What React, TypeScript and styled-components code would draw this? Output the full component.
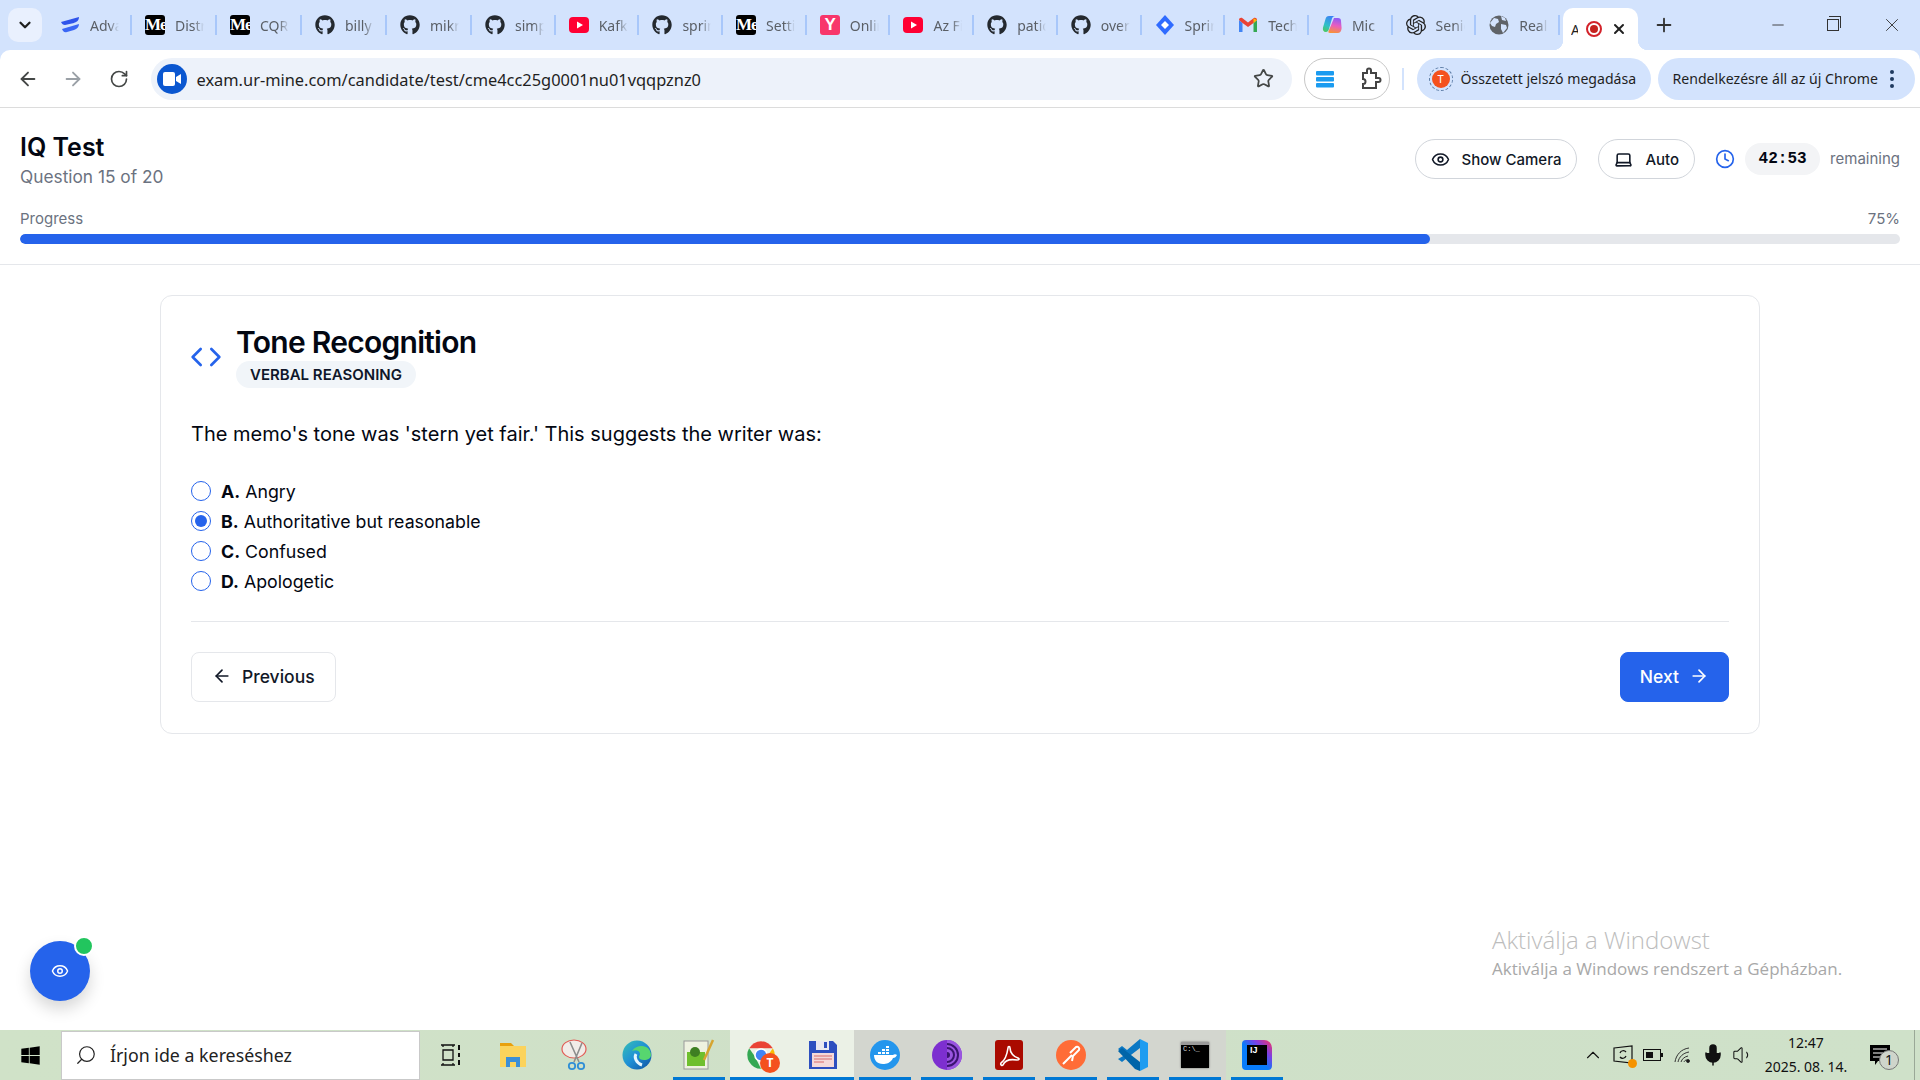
import React from "react";
import styled, { createGlobalStyle } from "styled-components";
import {
	ArrowLeft,
	ArrowRight,
	ChevronDown,
	ChevronUp,
	Clock,
	Code,
	Eye,
	Laptop,
	Mic,
	Minus,
	Plus,
	RotateCw,
	Search,
	Star,
	Volume1,
	X
} from "lucide-react";
import { FaGithub, FaWindows } from "react-icons/fa";
import { SiOpenai } from "react-icons/si";

const GlobalStyle = createGlobalStyle`
	* { box-sizing: border-box; margin: 0; padding: 0; }
	html, body, #root { width: 100%; height: 100%; overflow: hidden; }
	body { background: #d3e3fd; font-family: Inter, "Noto Sans", sans-serif; color: #030712; }
`;

const Screen = styled.div`
	position: relative;
	display: grid;
	grid-template-rows: 50px 58px 1fr 50px;
	width: 1920px;
	height: 1080px;
	background: #d3e3fd;
`;

/* ---------- browser tabs ---------- */
const TabStrip = styled.div`
	display: flex;
	align-items: flex-end;
	padding-left: 8px;
	font-family: "Noto Sans", sans-serif;
`;

const TabListButton = styled.div`
	width: 34px;
	height: 34px;
	margin: 0 4px 8px 0;
	border-radius: 10px;
	background: #e9f0fe;
	color: #1f1f1f;
	display: flex;
	align-items: center;
	justify-content: center;
`;

const Tab = styled.div`
	position: relative;
	flex: 0 0 83.7px;
	height: 50px;
	padding-left: 14px;
	display: flex;
	align-items: center;
	gap: 10px;
	&:nth-child(-n + 6) {
		flex-basis: 85px;
	}
	&::after {
		content: "";
		position: absolute;
		right: -1px;
		top: 15px;
		width: 2px;
		height: 20px;
		background: #a8c7fa;
	}
`;

const TabTitle = styled.span`
	width: 29px;
	overflow: hidden;
	white-space: nowrap;
	font-size: 14px;
	color: #5a5f66;
	-webkit-mask-image: linear-gradient(90deg, #000 65%, transparent);
	mask-image: linear-gradient(90deg, #000 65%, transparent);
`;

const ActiveTab = styled.div`
	position: relative;
	flex: 0 0 75px;
	height: 42px;
	margin-left: 4px;
	padding-left: 8px;
	display: flex;
	align-items: center;
	background: #fff;
	border-radius: 10px 10px 0 0;
	font-size: 14px;
	color: #1f1f1f;
	&::before,
	&::after {
		content: "";
		position: absolute;
		bottom: 0;
		width: 10px;
		height: 10px;
	}
	&::before {
		left: -10px;
		background: radial-gradient(circle at 0 0, transparent 10px, #fff 10.5px);
	}
	&::after {
		right: -10px;
		background: radial-gradient(circle at 100% 0, transparent 10px, #fff 10.5px);
	}
`;

const ActiveLetter = styled.span`
	width: 7px;
	overflow: hidden;
`;

const RecordDot = styled.span`
	width: 16px;
	height: 16px;
	margin-left: 8px;
	border-radius: 50%;
	border: 2px solid #d3222a;
	display: flex;
	align-items: center;
	justify-content: center;
	&::before {
		content: "";
		width: 8px;
		height: 8px;
		border-radius: 50%;
		background: #c5221f;
	}
`;

const TabClose = styled.span`
	display: flex;
	margin-left: 9px;
	color: #1f1f1f;
`;

const NewTab = styled.div`
	margin: 0 auto 8px 14px;
	width: 24px;
	height: 34px;
	display: flex;
	align-items: center;
	justify-content: center;
	color: #333;
`;

const WindowButton = styled.div`
	width: 57px;
	height: 50px;
	display: flex;
	align-items: center;
	justify-content: center;
	color: #333;
`;

const RestoreIcon = styled.span`
	position: relative;
	width: 12px;
	height: 12px;
	margin-right: 3px;
	border: 1px solid #333;
	&::before {
		content: "";
		position: absolute;
		left: 1px;
		top: -4px;
		width: 11px;
		height: 11px;
		border-top: 1px solid #333;
		border-right: 1px solid #333;
	}
`;

const FaviconSquare = styled.span<{ $bg: string }>`
	flex: none;
	width: 20px;
	height: 20px;
	border-radius: 3px;
	background: ${p => p.$bg};
	color: #fff;
	overflow: hidden;
	display: flex;
	align-items: center;
	font: bold 17px "Liberation Serif", serif;
	letter-spacing: -1px;
`;

const FaviconY = styled(FaviconSquare)`
	justify-content: center;
	font: 900 17px "Liberation Sans", sans-serif;
`;

const Svg20 = styled.svg`
	flex: none;
	width: 20px;
	height: 20px;
`;

const YoutubeIcon = () => (
	<Svg20 viewBox="0 0 20 20">
		<rect y="2" width="20" height="16" rx="4" fill="#ff0033" />
		<path d="M8 6.5 14 10 8 13.5Z" fill="#fff" />
	</Svg20>
);

const WaveLogo = () => (
	<Svg20 viewBox="0 0 20 20">
		<path d="M1 7 19 2c0 4-3 5-5 6L5 10C3 10 2 9 1 7Z" fill="#2f54eb" />
		<path d="M2 14 19 9c0 3-2 5-5 6l-7 2c-3 1-4-1-5-3Z" fill="#3b67f5" />
	</Svg20>
);

const DiamondLogo = () => (
	<Svg20 viewBox="0 0 20 20">
		<path d="M10 0 19 10 10 20 1 10Z" fill="#2f6bff" />
		<path d="M10 6 14 10 10 14 6 10Z" fill="#fff" />
	</Svg20>
);

const GmailLogo = () => (
	<Svg20 viewBox="0 0 20 20">
		<path d="M1 5v12h3.5V8Z" fill="#4285f4" />
		<path d="M15.5 8v9H19V5Z" fill="#34a853" />
		<path d="M1 5c0-2 2-2.8 3.5-1.8L10 7.5l5.5-4.3C17 2.2 19 3 19 5l-3.5 3L10 12 4.5 8Z" fill="#ea4335" />
		<path d="M15.5 3.2 19 5l-3.5 3Z" fill="#fbbc04" />
	</Svg20>
);

const CopilotLogo = () => (
	<Svg20 viewBox="0 0 20 20">
		<defs>
			<linearGradient id="cp1" x1="0.6" y1="0" x2="0.2" y2="1">
				<stop offset="0" stopColor="#3b82f6" />
				<stop offset="0.6" stopColor="#2fc0c8" />
				<stop offset="1" stopColor="#4cc95c" />
			</linearGradient>
			<linearGradient id="cp2" x1="0.6" y1="0" x2="0.4" y2="1">
				<stop offset="0" stopColor="#8b5cf6" />
				<stop offset="0.5" stopColor="#e85dc0" />
				<stop offset="1" stopColor="#f7923a" />
			</linearGradient>
		</defs>
		<path d="M12 3h4c2 0 3 1 3 3l.6 7c0 3-1.6 5-4 5H8c-2 0-2-1-1-3Z" fill="url(#cp2)" />
		<path d="M7 1h6c-1.5 0-2.5 1-3 2.5L7 14c-.6 2-1.6 3-3 3-2.4 0-3.6-2-3-4.5L3.5 4C4 2 5 1 7 1Z" fill="url(#cp1)" />
	</Svg20>
);

const GlobeLogo = () => (
	<Svg20 viewBox="0 0 20 20">
		<circle cx="10" cy="10" r="9.5" fill="#5f6368" />
		<path d="M5 3l4 1 1 3-3 2-1 3-3-1-2-3ZM12 9l5 1 1 3-4 5-2-4ZM12 1l4 2 1 3-4-1Z" fill="#d3e3fd" />
	</Svg20>
);

const GithubIcon = () => <FaGithub size={20} color="#24292f" style={{ flex: "none" }} />;
const MediumIcon = () => <FaviconSquare $bg="#000">Me</FaviconSquare>;
const OpenAiIcon = () => <SiOpenai size={20} color="#222" style={{ flex: "none" }} />;

const tabs: { title: string; icon: React.ReactNode }[] = [
	{ title: "Advanced", icon: <WaveLogo /> },
	{ title: "Distributed", icon: <MediumIcon /> },
	{ title: "CQRS", icon: <MediumIcon /> },
	{ title: "billy", icon: <GithubIcon /> },
	{ title: "mikro", icon: <GithubIcon /> },
	{ title: "simple", icon: <GithubIcon /> },
	{ title: "Kafka", icon: <YoutubeIcon /> },
	{ title: "spring", icon: <GithubIcon /> },
	{ title: "Settings", icon: <MediumIcon /> },
	{ title: "Online", icon: <FaviconY $bg="#f8366b">Y</FaviconY> },
	{ title: "Az Fi", icon: <YoutubeIcon /> },
	{ title: "patio", icon: <GithubIcon /> },
	{ title: "overt", icon: <GithubIcon /> },
	{ title: "Spring", icon: <DiamondLogo /> },
	{ title: "Tech", icon: <GmailLogo /> },
	{ title: "Mic", icon: <CopilotLogo /> },
	{ title: "Senior", icon: <OpenAiIcon /> },
	{ title: "Real", icon: <GlobeLogo /> }
];

/* ---------- browser toolbar ---------- */
const Toolbar = styled.div`
	display: flex;
	align-items: center;
	padding-left: 5px;
	background: #fff;
	border-radius: 10px 10px 0 0;
	border-bottom: 1px solid #dcdcdc;
	font-family: "Noto Sans", sans-serif;
`;

const NavButton = styled.div<{ $dim?: boolean }>`
	flex: 0 0 45.5px;
	display: flex;
	justify-content: center;
	color: ${p => (p.$dim ? "#9aa0a6" : "#444746")};
`;

const AddressBar = styled.div`
	margin-left: 9px;
	width: 1141px;
	height: 42px;
	border-radius: 21px;
	background: #edf2fa;
	display: flex;
	align-items: center;
	padding: 0 18px 0 6px;
	font-size: 16.4px;
	color: #1f1f1f;
`;

const SiteChip = styled.span`
	width: 30px;
	height: 30px;
	margin-right: 10px;
	border-radius: 50%;
	background: #0b57d0;
	display: flex;
	align-items: center;
	justify-content: center;
`;

const Url = styled.span`
	flex: 1;
	padding-top: 2px;
`;

const ExtensionGroup = styled.div`
	margin-left: 12px;
	width: 86px;
	height: 42px;
	border: 1px solid #c7c7c7;
	border-radius: 21px;
	display: flex;
	align-items: center;
	justify-content: space-between;
	padding: 0 7px 0 11px;
`;

const ToolbarDivider = styled.span`
	margin: 0 13px 0 12px;
	width: 2px;
	height: 22px;
	background: #d3e3fd;
`;

const Pill = styled.div<{ $w: number }>`
	flex: 0 0 ${p => p.$w}px;
	height: 42px;
	border-radius: 21px;
	background: #d3e3fd;
	display: flex;
	align-items: center;
	font-size: 14.1px;
	white-space: nowrap;
	color: #1f1f1f;
	& + & {
		margin-left: 7px;
	}
`;

const Avatar = styled.span`
	width: 24px;
	height: 24px;
	margin: 0 8px 0 12px;
	border-radius: 50%;
	border: 1.5px dashed #5f7fa8;
	display: flex;
	align-items: center;
	justify-content: center;
	&::before {
		content: "T";
		width: 18px;
		height: 18px;
		border-radius: 50%;
		background: #f4511e;
		color: #fff;
		font-size: 11px;
		line-height: 18px;
		text-align: center;
	}
`;

const PillText = styled.span<{ $left?: number }>`
	margin-left: ${p => p.$left ?? 0}px;
`;

const MoreDots = styled.span`
	margin-left: 12px;
	width: 5px;
	display: flex;
	flex-direction: column;
	gap: 3px;
	i {
		width: 4px;
		height: 4px;
		border-radius: 50%;
		background: #1f3a5f;
	}
`;

/* ---------- test page ---------- */
const Page = styled.div`
	background: #fff;
	display: flex;
	flex-direction: column;
`;

const Header = styled.header`
	padding: 23px 20px 20px;
	border-bottom: 1px solid #e5e7eb;
`;

const HeaderRow = styled.div`
	display: flex;
	justify-content: space-between;
	align-items: center;
	margin-bottom: 20px;
`;

const TestTitle = styled.h1`
	font-size: 25px;
	line-height: 32px;
	font-weight: 600;
	color: #030712;
`;

const Subtitle = styled.p`
	margin-top: 2px;
	font-size: 17.3px;
	line-height: 24px;
	color: #6b7280;
`;

const HeaderActions = styled.div`
	display: flex;
	align-items: center;
	margin-bottom: 2px;
`;

const RoundButton = styled.div`
	height: 40px;
	margin-right: 21px;
	padding: 0 15px;
	border: 1px solid #d1d5db;
	border-radius: 20px;
	display: flex;
	align-items: center;
	gap: 12px;
	font-size: 15px;
	font-weight: 500;
	color: #111827;
	& + & {
		margin-right: 20px;
	}
`;

const TimerPill = styled.span`
	margin: 0 10px;
	height: 32px;
	width: 75px;
	border-radius: 16px;
	background: #f3f4f6;
	display: flex;
	align-items: center;
	justify-content: center;
	font: bold 16px "Liberation Mono", monospace;
	color: #030712;
`;

const MutedText = styled.span`
	font-size: 15px;
	line-height: 20px;
	color: #6b7280;
`;

const ProgressLabels = styled.div`
	display: flex;
	justify-content: space-between;
	margin-bottom: 5px;
`;

const ProgressTrack = styled.div`
	height: 10px;
	border-radius: 5px;
	background: #e5e7eb;
	overflow: hidden;
`;

const ProgressFill = styled.div`
	height: 100%;
	border-radius: 5px;
	background: #2563eb;
`;

const Main = styled.main`
	padding: 30px 160px;
`;

const Card = styled.section`
	padding: 29px 30px 31px;
	border: 1px solid #e5e7eb;
	border-radius: 12px;
`;

const CardHeader = styled.div`
	display: flex;
	align-items: center;
	gap: 14px;
	margin-bottom: 32px;
	& > svg {
		margin-left: -1px;
	}
`;

const CardTitle = styled.h2`
	font-size: 30px;
	line-height: 34px;
	font-weight: 600;
	letter-spacing: -0.73px;
	color: #030712;
`;

const Badge = styled.span`
	display: block;
	width: fit-content;
	margin-top: 2px;
	height: 27px;
	padding: 0 14px;
	border-radius: 14px;
	background: #f1f5f9;
	font-size: 15px;
	line-height: 27px;
	font-weight: 600;
	color: #0f172a;
`;

const Question = styled.p`
	font-size: 20px;
	line-height: 28px;
	margin-bottom: 28px;
	color: #030712;
`;

const Options = styled.div`
	display: flex;
	flex-direction: column;
	padding-bottom: 25px;
	border-bottom: 1px solid #e5e7eb;
`;

const OptionRow = styled.label`
	display: flex;
	align-items: center;
	gap: 10px;
	height: 30px;
	font-size: 17.75px;
	color: #030712;
	b {
		font-weight: 700;
	}
`;

const Radio = styled.span<{ $checked?: boolean }>`
	width: 20px;
	height: 20px;
	border-radius: 50%;
	border: 1px solid #2563eb;
	display: flex;
	align-items: center;
	justify-content: center;
	&::before {
		content: "";
		width: 12px;
		height: 12px;
		border-radius: 50%;
		background: ${p => (p.$checked ? "#2563eb" : "transparent")};
	}
`;

const CardFooter = styled.div`
	display: flex;
	justify-content: space-between;
	margin-top: 30px;
`;

const NavAction = styled.div<{ $primary?: boolean }>`
	height: 50px;
	padding: 0 ${p => (p.$primary ? 19 : 20)}px 2px;
	display: flex;
	align-items: center;
	gap: 10px;
	border-radius: 8px;
	border: 1px solid ${p => (p.$primary ? "#2563eb" : "#e5e7eb")};
	background: ${p => (p.$primary ? "#2563eb" : "#fff")};
	color: ${p => (p.$primary ? "#fff" : "#111827")};
	font-size: 17.5px;
	font-weight: 500;
`;

const Fab = styled.div`
	position: absolute;
	left: 30px;
	top: 941px;
	width: 60px;
	height: 60px;
	border-radius: 50%;
	background: #2563eb;
	box-shadow: 0 8px 16px rgba(0, 0, 0, 0.16);
	display: flex;
	align-items: center;
	justify-content: center;
	color: #fff;
`;

const FabDot = styled.span`
	position: absolute;
	right: -4px;
	top: -5px;
	width: 20px;
	height: 20px;
	border-radius: 50%;
	background: #22c55e;
	border: 2px solid #fff;
`;

const Watermark = styled.div`
	position: absolute;
	left: 1492px;
	top: 923px;
	font-family: "Open Sans", sans-serif;
	color: #bdbdbd;
`;

const WatermarkTitle = styled.div`
	font-size: 24px;
	line-height: 34px;
	font-weight: 300;
`;

const WatermarkLine = styled.div`
	font-size: 17px;
	line-height: 24px;
	font-weight: 500;
	color: #a8a8a8;
`;

/* ---------- windows taskbar ---------- */
const Taskbar = styled.footer`
	display: flex;
	align-items: stretch;
	background: linear-gradient(90deg, #d0e2c8, #cfe0c8 50%, #cfe1c9);
	font-family: "Noto Sans", sans-serif;
	color: #111;
`;

const StartButton = styled.div`
	flex: 0 0 61px;
	display: flex;
	align-items: center;
	justify-content: center;
`;

const SearchBox = styled.div`
	flex: 0 0 359px;
	margin: 1px 0 0;
	padding: 0 0 2px 13px;
	background: #fff;
	border: 1px solid #c9c9c9;
	display: flex;
	align-items: center;
	gap: 13px;
	font-size: 17.8px;
	color: #222;
`;

const TaskItem = styled.div<{ $state?: "idle" | "run" | "open" | "focus" }>`
	position: relative;
	flex: 0 0 62px;
	display: flex;
	align-items: center;
	justify-content: center;
	background: ${p =>
		p.$state === "focus" ? "#ebf1e6" : p.$state === "open" ? "#d3d6cf" : "transparent"};
	&::after {
		content: "";
		display: ${p => (!p.$state || p.$state === "idle" ? "none" : "block")};
		position: absolute;
		bottom: 0;
		left: ${p => (p.$state === "focus" ? 0 : 5)}px;
		right: ${p => (p.$state === "focus" ? 0 : 5)}px;
		height: 3px;
		background: #0078d4;
	}
`;

const ChromeWrap = styled.span`
	position: relative;
	display: flex;
`;

const ChromeProfile = styled.span`
	position: absolute;
	right: -4px;
	bottom: -3px;
	width: 20px;
	height: 20px;
	border-radius: 50%;
	background: #f4511e;
	color: #fff;
	font: bold 12px/20px "Noto Sans", sans-serif;
	text-align: center;
`;

const ChromeIcon = () => (
	<svg width="30" height="30" viewBox="0 0 24 24">
		<path d="M2.5 6.5a11 11 0 0 1 19 0H12Z" fill="#ea4335" />
		<path d="M21.5 6.5A11 11 0 0 1 12 23l5-10Z" fill="#fbbc04" />
		<path d="M12 23A11 11 0 0 1 2.5 6.5L7 13Z" fill="#34a853" />
		<circle cx="12" cy="12" r="5.5" fill="#fff" />
		<circle cx="12" cy="12" r="4.2" fill="#4285f4" />
	</svg>
);

const TerminalTile = styled.span`
	width: 28px;
	height: 26px;
	background: #000;
	border-top: 3px solid #9a9a9a;
	box-shadow: 0 0 2px #666;
	color: #ddd;
	font: 7px/9px "Liberation Mono", monospace;
	padding-left: 2px;
`;

const IdeaTile = styled.span`
	position: relative;
	width: 30px;
	height: 30px;
	border-radius: 4px 8px 4px 4px;
	background: linear-gradient(45deg, #087cfa 45%, #7b3fe4 70%, #fe315d);
	display: flex;
	align-items: center;
	justify-content: center;
`;

const IdeaInner = styled.span`
	width: 20px;
	height: 20px;
	background: #000;
	color: #fff;
	font: bold 9px/11px "Liberation Sans", sans-serif;
	padding-left: 3px;
`;

const icons: { key: string; state?: "idle" | "run" | "open" | "focus"; node: React.ReactNode }[] = [
	{
		key: "tasks",
		node: (
			<svg width="22" height="24" viewBox="0 0 22 24" fill="none" stroke="#111" strokeWidth="1.3">
				<path d="M1 2h14M1 22h14M3 7h10v10H3ZM3 2v2M13 2v2M3 20v2M13 20v2" />
				<path d="M19 2v5M19 17v5M19 10v4" strokeWidth="2" />
			</svg>
		)
	},
	{
		key: "explorer",
		node: (
			<svg width="28" height="28" viewBox="0 0 28 28">
				<path d="M1 2h11l3 3H1Z" fill="#e8a00d" />
				<rect x="1" y="5" width="26" height="21" fill="#fbd35c" />
				<path d="M7 16h14v10h-4v-5h-6v5H7Z" fill="#3d8fd6" />
			</svg>
		)
	},
	{
		key: "snip",
		node: (
			<svg width="28" height="32" viewBox="0 0 28 32" fill="none">
				<ellipse cx="13" cy="10" rx="12" ry="9" fill="#f1ece8" stroke="#e25b55" strokeWidth="1.2" />
				<path d="M9 3 18 23M21 4 13 23" stroke="#8d8d8d" strokeWidth="1.6" />
				<circle cx="11" cy="27" r="3.2" stroke="#2f8fd6" strokeWidth="1.8" />
				<circle cx="20" cy="27" r="3.2" stroke="#2f8fd6" strokeWidth="1.8" />
			</svg>
		)
	},
	{
		key: "edge",
		node: (
			<svg width="30" height="30" viewBox="0 0 30 30">
				<defs>
					<linearGradient id="edg" x1="0" y1="0" x2="1" y2="1">
						<stop offset="0" stopColor="#35c1b5" />
						<stop offset="0.5" stopColor="#1f8fd6" />
						<stop offset="1" stopColor="#0f4f9f" />
					</linearGradient>
				</defs>
				<circle cx="15" cy="15" r="14.5" fill="url(#edg)" />
				<path d="M29 15c0 3-3 5-7 5-3 0-5-1-5-3 0-1 1-2 1-3 0-3-4-5-8-3 3-5 10-6 14-4 3 1 5 5 5 8Z" fill="#57d66f" />
				<path d="M14 14c-2 3 0 9 6 11" stroke="#e6f6ff" strokeWidth="3" fill="none" />
			</svg>
		)
	},
	{
		key: "notes",
		state: "run",
		node: (
			<svg width="32" height="34" viewBox="0 0 32 34">
				<rect x="1" y="3" width="24" height="28" fill="#eef2e0" stroke="#999" />
				<rect x="4" y="14" width="18" height="14" fill="#6fbf2e" />
				<circle cx="12" cy="14" r="5" fill="#3e7f22" />
				<path d="M30 2 21 22" stroke="#d6a531" strokeWidth="2.5" />
			</svg>
		)
	},
	{
		key: "chrome",
		state: "focus",
		node: (
			<ChromeWrap>
				<ChromeIcon />
				<ChromeProfile>T</ChromeProfile>
			</ChromeWrap>
		)
	},
	{
		key: "save",
		state: "focus",
		node: (
			<svg width="28" height="28" viewBox="0 0 28 28">
				<path d="M0 0h24l4 4v24H0Z" fill="#2d4fbf" />
				<rect x="7" y="0" width="13" height="9" fill="#e8e8f0" />
				<rect x="15" y="1" width="3" height="6" fill="#2d4fbf" />
				<rect x="3" y="12" width="22" height="14" fill="#f4d9d9" />
				<path d="M5 15h18M5 18h18M5 21h10" stroke="#d96b6b" />
			</svg>
		)
	},
	{
		key: "docker",
		state: "open",
		node: (
			<svg width="30" height="30" viewBox="0 0 30 30">
				<circle cx="15" cy="15" r="15" fill="#2496ed" />
				<path d="M4 15h19c1-1 3-1 4 0-1 2-2 3-4 3-2 5-7 6-10 6-6 0-9-4-9-9Z" fill="#fff" />
				<path d="M8 12h3v2H8ZM12 12h3v2h-3ZM16 12h3v2h-3ZM12 9h3v2h-3ZM16 9h3v2h-3ZM16 6h3v2h-3Z" fill="#fff" />
			</svg>
		)
	},
	{
		key: "tor",
		state: "open",
		node: (
			<svg width="30" height="30" viewBox="0 0 30 30" fill="none">
				<circle cx="15" cy="15" r="15" fill="#7d2fd0" />
				<path d="M15 0a15 15 0 0 1 0 30Z" fill="#9a55e0" />
				<path d="M15 4a11 11 0 0 1 0 22M15 8a7 7 0 0 1 0 14" stroke="#3b1470" strokeWidth="2" />
				<path d="M15 12a3 3 0 0 1 0 6Z" fill="#3b1470" />
			</svg>
		)
	},
	{
		key: "acrobat",
		state: "open",
		node: (
			<svg width="28" height="30" viewBox="0 0 28 30" fill="none">
				<rect width="28" height="30" rx="3" fill="#aa0a00" />
				<path d="M6 23c3-2 6-8 7-15 0-2 2-2 2 0 0 5 4 9 8 10 2 1 1 2-1 2-6-1-12 0-14 5-1 1-3 0-2-2Z" stroke="#fff" strokeWidth="1.6" />
			</svg>
		)
	},
	{
		key: "postman",
		state: "open",
		node: (
			<svg width="30" height="30" viewBox="0 0 30 30" fill="none">
				<circle cx="15" cy="15" r="15" fill="#ff6c37" />
				<path d="M7 24l9-9M14 13l6-6c2-1 4 1 3 3l-6 6-1 5" stroke="#fff" strokeWidth="2" />
			</svg>
		)
	},
	{
		key: "vscode",
		state: "open",
		node: (
			<svg width="30" height="32" viewBox="0 0 30 32">
				<path d="M22 0 30 4v24l-8 4Z" fill="#1f9cf0" />
				<path d="M22 0v9L9 19l-5 4-4-3 7-4-7-6 4-3 5 4Z" fill="#0b78c4" />
				<path d="M22 32v-9L4 9 0 12l17 18Z" fill="#0065a9" />
			</svg>
		)
	},
	{
		key: "terminal",
		state: "open",
		node: <TerminalTile>C:\_</TerminalTile>
	},
	{
		key: "idea",
		state: "run",
		node: (
			<IdeaTile>
				<IdeaInner>IJ</IdeaInner>
			</IdeaTile>
		)
	}
];

const Tray = styled.div`
	margin-left: auto;
	display: flex;
	align-items: center;
`;

const TrayCell = styled.span`
	position: relative;
	flex: 0 0 30px;
	display: flex;
	justify-content: center;
`;

const SyncDot = styled.span`
	position: absolute;
	right: 1px;
	bottom: -3px;
	width: 9px;
	height: 9px;
	border-radius: 50%;
	background: #f59300;
`;

const DateTime = styled.div`
	flex: 0 0 96px;
	text-align: center;
	font-size: 14px;
	line-height: 24px;
`;

const NotifyCell = styled.span`
	position: relative;
	flex: 0 0 52px;
	margin-right: 8px;
	display: flex;
	justify-content: center;
`;

const NotifyCount = styled.span`
	position: absolute;
	left: 25px;
	top: 5px;
	width: 20px;
	height: 20px;
	border-radius: 50%;
	border: 1px solid #777;
	background: #cfd5cb;
	font-size: 14px;
	line-height: 18px;
	text-align: center;
`;

const ShowDesktop = styled.span`
	flex: 0 0 6px;
	align-self: stretch;
	border-left: 1px solid #9aa897;
`;

const options = [
	{ letter: "A", text: "Angry" },
	{ letter: "B", text: "Authoritative but reasonable", checked: true },
	{ letter: "C", text: "Confused" },
	{ letter: "D", text: "Apologetic" }
];

const App = () => {
	const progress = 75;
	return (
		<Screen>
			<GlobalStyle />
			<TabStrip>
				<TabListButton>
					<ChevronDown size={18} strokeWidth={3} />
				</TabListButton>
				{tabs.map((tab, i) => (
					<Tab key={i}>
						{tab.icon}
						<TabTitle>{tab.title}</TabTitle>
					</Tab>
				))}
				<ActiveTab>
					<ActiveLetter>A</ActiveLetter>
					<RecordDot />
					<TabClose>
						<X size={16} strokeWidth={3} />
					</TabClose>
				</ActiveTab>
				<NewTab>
					<Plus size={22} strokeWidth={2} />
				</NewTab>
				<WindowButton>
					<Minus size={18} strokeWidth={1.2} />
				</WindowButton>
				<WindowButton>
					<RestoreIcon />
				</WindowButton>
				<WindowButton>
					<X size={22} strokeWidth={1} />
				</WindowButton>
			</TabStrip>

			<Toolbar>
				<NavButton>
					<ArrowLeft size={22} />
				</NavButton>
				<NavButton $dim>
					<ArrowRight size={22} />
				</NavButton>
				<NavButton>
					<RotateCw size={20} />
				</NavButton>
				<AddressBar>
					<SiteChip>
						<svg width="18" height="16" viewBox="0 0 18 16" fill="#fff">
							<rect x="0" y="1" width="12" height="14" rx="2" />
							<path d="M13 6l5-3v10l-5-3Z" />
						</svg>
					</SiteChip>
					<Url>exam.ur-mine.com/candidate/test/cme4cc25g0001nu01vqqpznz0</Url>
					<Star size={21} color="#444746" />
				</AddressBar>
				<ExtensionGroup>
					<svg width="18" height="18" viewBox="0 0 18 18" fill="#1a9bf0">
						<rect y="1" width="18" height="4.5" rx="1" />
						<rect y="7" width="18" height="4.5" rx="1" />
						<rect y="13" width="18" height="4.5" rx="1" />
					</svg>
					<svg width="24" height="24" viewBox="0 0 24 24" fill="none" stroke="#444" strokeWidth="2">
						<path d="M5 6h4V3.5a2 2 0 0 1 4 0V6h5v5h2.5a2 2 0 0 1 0 4H18v6H5v-4a2.5 2.5 0 0 0 0-5Z" />
					</svg>
				</ExtensionGroup>
				<ToolbarDivider />
				<Pill $w={234}>
					<Avatar />
					<span>Összetett jelszó megadása</span>
				</Pill>
				<Pill $w={257}>
					<PillText $left={15}>Rendelkezésre áll az új Chrome</PillText>
					<MoreDots>
						<i />
						<i />
						<i />
					</MoreDots>
				</Pill>
			</Toolbar>

			<Page>
				<Header>
					<HeaderRow>
						<div>
							<TestTitle>IQ Test</TestTitle>
							<Subtitle>Question 15 of 20</Subtitle>
						</div>
						<HeaderActions>
							<RoundButton>
								<Eye size={19} />
								Show Camera
							</RoundButton>
							<RoundButton>
								<Laptop size={19} />
								Auto
							</RoundButton>
							<Clock size={20} color="#2563eb" />
							<TimerPill>42:53</TimerPill>
							<MutedText>remaining</MutedText>
						</HeaderActions>
					</HeaderRow>
					<ProgressLabels>
						<MutedText>Progress</MutedText>
						<MutedText>{progress}%</MutedText>
					</ProgressLabels>
					<ProgressTrack>
						<ProgressFill style={{ width: `${progress}%` }} />
					</ProgressTrack>
				</Header>
				<Main>
					<Card>
						<CardHeader>
							<Code size={32} color="#2563eb" />
							<div>
								<CardTitle>Tone Recognition</CardTitle>
								<Badge>VERBAL REASONING</Badge>
							</div>
						</CardHeader>
						<Question>The memo's tone was 'stern yet fair.' This suggests the writer was:</Question>
						<Options>
							{options.map(o => (
								<OptionRow key={o.letter}>
									<Radio $checked={o.checked} />
									<span>
										<b>{o.letter}.</b> {o.text}
									</span>
								</OptionRow>
							))}
						</Options>
						<CardFooter>
							<NavAction>
								<ArrowLeft size={20} />
								Previous
							</NavAction>
							<NavAction $primary>
								Next
								<ArrowRight size={20} />
							</NavAction>
						</CardFooter>
					</Card>
				</Main>
			</Page>

			<Taskbar>
				<StartButton>
					<FaWindows size={21} color="#000" />
				</StartButton>
				<SearchBox>
					<Search size={22} strokeWidth={1.3} style={{ transform: "scaleX(-1)" }} />
					Írjon ide a kereséshez
				</SearchBox>
				{icons.map(i => (
					<TaskItem key={i.key} $state={i.state}>
						{i.node}
					</TaskItem>
				))}
				<Tray>
					<TrayCell>
						<ChevronUp size={22} strokeWidth={1.2} />
					</TrayCell>
					<TrayCell>
						<svg width="20" height="20" viewBox="0 0 20 20" fill="none" stroke="#111" strokeWidth="1.2">
							<path d="M1 3 19 1v17L1 16Z" />
							<path d="M7 8a3.5 3.5 0 0 1 6-1M13 11a3.5 3.5 0 0 1-6 1" />
						</svg>
						<SyncDot />
					</TrayCell>
					<TrayCell>
						<svg width="20" height="12" viewBox="0 0 20 12">
							<rect x=".5" y=".5" width="17" height="11" fill="none" stroke="#111" />
							<rect x="3" y="3" width="7" height="6" fill="#111" />
							<rect x="18" y="4" width="2" height="4" fill="#111" />
						</svg>
					</TrayCell>
					<TrayCell>
						<svg width="18" height="16" viewBox="0 0 18 16" fill="none" stroke="#333" strokeWidth="1">
							<path d="M1 15C2 8 7 2 15 1M4 15c1-5 5-9 11-10M7 15c1-3 3-5 7-6M10 15c.5-1 1-2 3-2" />
							<circle cx="14" cy="14" r="1.5" fill="#111" />
						</svg>
					</TrayCell>
					<TrayCell>
						<Mic size={24} strokeWidth={1.5} fill="#111" />
					</TrayCell>
					<TrayCell>
						<Volume1 size={22} strokeWidth={1.1} />
					</TrayCell>
					<DateTime>
						<div>12:47</div>
						<div>2025. 08. 14.</div>
					</DateTime>
					<NotifyCell>
						<svg width="20" height="20" viewBox="0 0 20 20">
							<path d="M0 0h20v16H8l-3 4v-4H0Z" fill="#000" />
							<path d="M3 4h14M3 8h14M3 12h10" stroke="#fff" />
						</svg>
						<NotifyCount>1</NotifyCount>
					</NotifyCell>
					<ShowDesktop />
				</Tray>
			</Taskbar>

			<Watermark>
				<WatermarkTitle>Aktiválja a Windowst</WatermarkTitle>
				<WatermarkLine>Aktiválja a Windows rendszert a Gépházban.</WatermarkLine>
			</Watermark>

			<Fab>
				<Eye size={18} />
				<FabDot />
			</Fab>
		</Screen>
	);
};

export default App;
